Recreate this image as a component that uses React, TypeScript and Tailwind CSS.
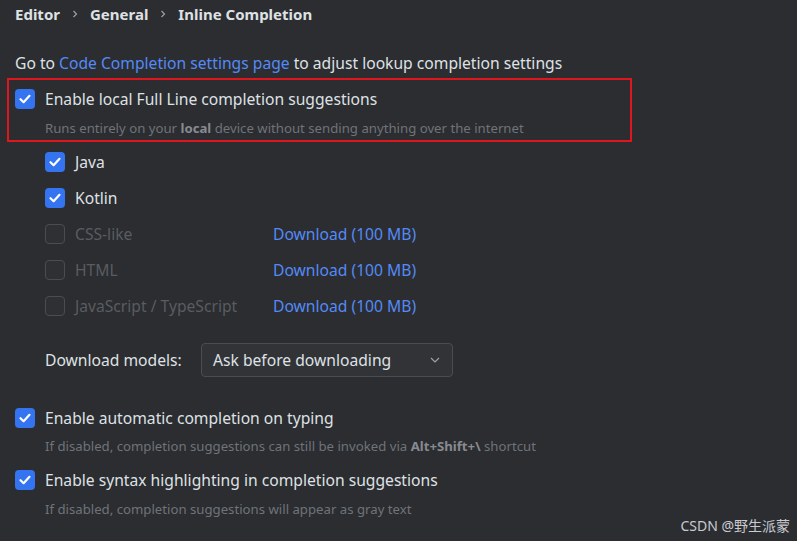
import React from "react";

const FONT = { fontFamily: '"Noto Sans", "Noto Sans CJK SC", sans-serif' };

// Checkbox in the IntelliJ new-UI look
const Check: React.FC<{ checked?: boolean }> = ({ checked }) =>
  checked ? (
    <span className="flex h-[20px] w-[20px] shrink-0 items-center justify-center rounded-[4px] bg-[#3574f0]">
      <svg width="14" height="14" viewBox="0 0 14 14" fill="none">
        <path d="M2.5 7.2 L5.6 10.2 L11.5 3.8" stroke="#fff" strokeWidth="2.2" strokeLinecap="round" strokeLinejoin="round" />
      </svg>
    </span>
  ) : (
    <span className="h-[20px] w-[20px] shrink-0 rounded-[4px] border border-[#4a4c51] bg-[#2e3034]" />
  );

const Crumb: React.FC = () => (
  <svg width="6" height="10" viewBox="0 0 6 10" className="mx-[12px]">
    <path d="M1.5 2 L4.5 5 L1.5 8" stroke="#9da0a8" strokeWidth="1.2" fill="none" />
  </svg>
);

const OptionRow: React.FC<{ label: string; checked?: boolean; disabled?: boolean; download?: boolean }> = ({
  label,
  checked,
  disabled,
  download,
}) => (
  <div className="flex h-[36px] items-center pl-[30px]">
    <Check checked={checked} />
    <span className={`ml-[10px] w-[198px] pt-[2px] text-[15.65px] ${disabled ? "text-[#595c62]" : "text-[#dfe1e5]"}`}>{label}</span>
    {download && <span className="pt-[2px] text-[15.65px] text-[#548af7]">Download (100 MB)</span>}
  </div>
);

export default function App() {
  return (
    <div className="relative h-[541px] w-[797px] overflow-hidden bg-[#2b2d30] px-[15px] text-[#dfe1e5]" style={FONT}>
      <div className="flex h-[28px] items-center text-[15px] font-bold">
        <span>Editor</span>
        <Crumb />
        <span>General</span>
        <Crumb />
        <span>Inline Completion</span>
      </div>

      <div className="mt-[25px] flex h-[20px] items-center whitespace-nowrap pt-[2px] text-[15.65px]">
        Go to&nbsp;<span className="text-[#548af7]">Code Completion settings page</span>&nbsp;to adjust lookup completion settings
      </div>

      <div className="-ml-[8px] mt-[5px] h-[64px] w-[625px] border-2 border-[#e0161f] pl-[6px] pt-[9px]">
        <div className="flex h-[20px] items-center">
          <Check checked />
          <span className="ml-[10px] pt-[2px] text-[15.65px]">Enable local Full Line completion suggestions</span>
        </div>
        <div className="ml-[30px] mt-[11px] flex h-[16px] items-center whitespace-nowrap pt-[2px] text-[13.2px] text-[#6f737a]">
          Runs entirely on your&nbsp;<b className="text-[#878a91]">local</b>&nbsp;device without sending anything over the internet
        </div>
      </div>

      <div className="mt-[2px]">
        <OptionRow label="Java" checked />
        <OptionRow label="Kotlin" checked />
        <OptionRow label="CSS-like" disabled download />
        <OptionRow label="HTML" disabled download />
        <OptionRow label="JavaScript / TypeScript" disabled download />
      </div>

      <div className="mt-[19px] flex h-[34px] items-center pl-[30px]">
        <span className="w-[156px] pt-[2px] text-[15.65px]">Download models:</span>
        <div className="flex h-[34px] w-[252px] items-center justify-between rounded-[4px] border border-[#4a4c51] bg-[#313337] pl-[11px] pr-[12px] text-[15.65px]">
          <span className="pt-[2px]">Ask before downloading</span>
          <svg width="10" height="6" viewBox="0 0 10 6">
            <path d="M1 1 L5 5 L9 1" stroke="#9da0a8" strokeWidth="1.2" fill="none" />
          </svg>
        </div>
      </div>

      <div className="mt-[31px] flex h-[20px] items-center">
        <Check checked />
        <span className="ml-[10px] pt-[2px] text-[15.65px]">Enable automatic completion on typing</span>
      </div>
      <div className="ml-[30px] mt-[10px] flex h-[16px] items-center whitespace-nowrap pt-[2px] text-[13.2px] text-[#6f737a]">
        If disabled, completion suggestions can still be invoked via&nbsp;<b className="text-[#878a91]">Alt+Shift+\</b>&nbsp;shortcut
      </div>

      <div className="mt-[16px] flex h-[20px] items-center">
        <Check checked />
        <span className="ml-[10px] pt-[2px] text-[15.65px]">Enable syntax highlighting in completion suggestions</span>
      </div>
      <div className="ml-[30px] mt-[11px] flex h-[16px] items-center whitespace-nowrap pt-[2px] text-[13.2px] text-[#6f737a]">
        If disabled, completion suggestions will appear as gray text
      </div>

      <div className="absolute bottom-[5px] right-[7px] text-[14px] text-[#c9cbd0]">CSDN @野生派蒙</div>
    </div>
  );
}
